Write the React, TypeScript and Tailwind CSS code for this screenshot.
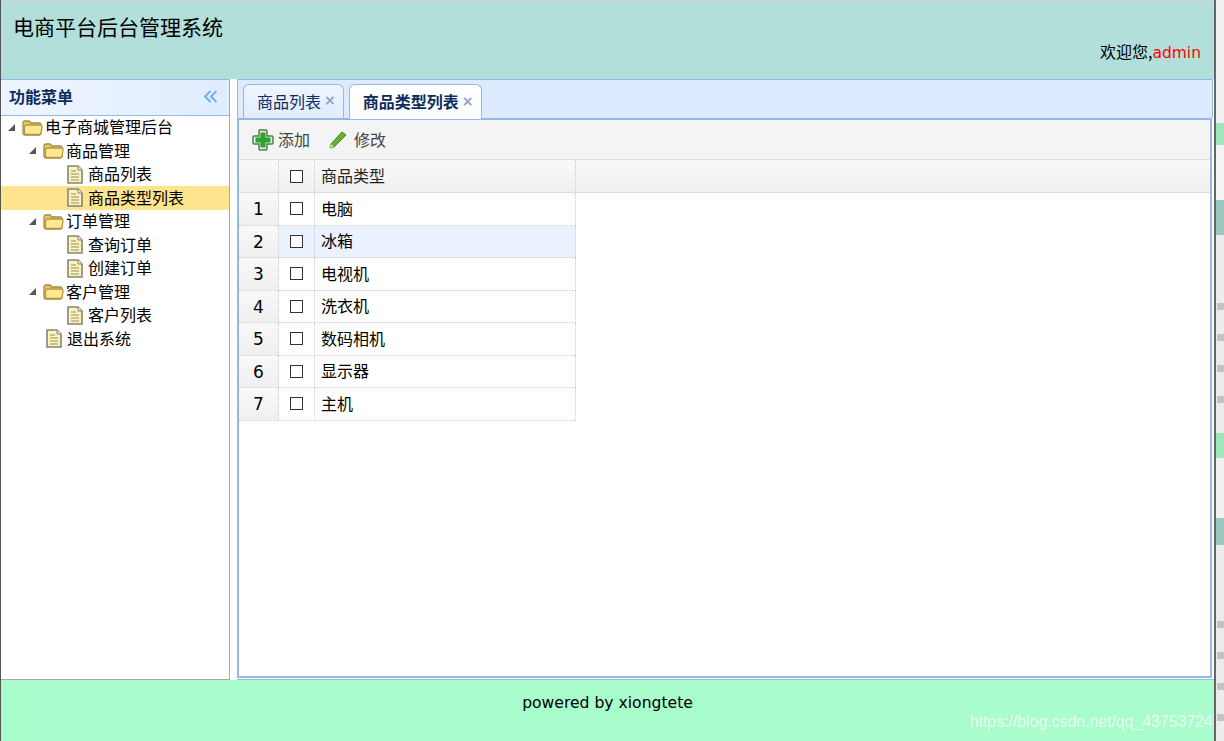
import { ReactNode } from "react"

const cjk = "font-['Noto_Sans_CJK_SC','DejaVu_Sans',sans-serif]"

function Arrow() {
  return (
    <svg width="9" height="9" viewBox="0 0 9 9" className="shrink-0">
      <path d="M8 1V8H1Z" fill="#555" />
    </svg>
  )
}

function Folder() {
  return (
    <svg width="21" height="17" viewBox="0 0 21 17" className="shrink-0">
      <path d="M1 4.500Q1 2 3 2H7L9 4H17Q19 4 19 6V14Q19 16 17 16H3Q1 16 1 14Z" fill="#e9c766" stroke="#a58a45" strokeWidth="1.300" />
      <path d="M2.500 7.500Q3 6 5 6H18Q20.500 6 20 8L19 14.500Q18.700 15.500 17 15.500H4Q2.500 15.500 2.500 14Z" fill="#fbe88f" stroke="#b4964a" strokeWidth="1.300" />
    </svg>
  )
}

function FileIcon() {
  return (
    <svg width="16" height="19" viewBox="0 0 16 19" className="shrink-0">
      <path d="M1 1H11L15 5V18H1Z" fill="#fdf3b4" stroke="#85857a" strokeWidth="1.600" />
      <path d="M11 1V5H15" fill="#eee" stroke="#85857a" />
      <path d="M4 6H9M4 9H12M4 12H12M4 15H12" stroke="#8f8f7e" strokeWidth="1.200" />
    </svg>
  )
}

function TreeRow({ depth, kind, label, active }: { depth: number; kind: "folder" | "file"; label: string; active?: boolean }) {
  const pad = depth === 0 ? "pl-[6px]" : depth === 1 ? "pl-[27px]" : "pl-[66px]"
  return (
    <div className={`flex h-[23.5px] items-center ${pad} ${active ? "bg-[#ffe48d]" : ""}`}>
      {kind === "folder" && <Arrow />}
      {kind === "folder" && <span className="ml-[6px]"><Folder /></span>}
      {kind === "file" && <FileIcon />}
      <span className={`${kind === "file" ? "ml-[5px]" : "ml-[2px]"} mb-[2px] text-[16px] leading-none text-black ${cjk}`}>{label}</span>
    </div>
  )
}

function Tab({ label, active }: { label: string; active?: boolean }) {
  return (
    <div
      className={`flex items-center rounded-t-[6px] border border-b-0 border-[#95b8e7] pb-[2px] pl-[13px] pr-[7px] text-[16px] text-[#0e2d5f] ${cjk} ${
        active ? "relative z-10 -mb-px h-[35px] bg-white font-bold" : "h-[34px] bg-gradient-to-b from-[#eff5ff] to-[#e0ecff]"
      }`}
    >
      {label}
      <span className="ml-[3px] font-['DejaVu_Sans',sans-serif] text-[14px] font-bold text-[#8aa4c8]">×</span>
    </div>
  )
}

function Cell({ className, children }: { className: string; children?: ReactNode }) {
  return <div className={`flex items-center border-r border-dotted border-[#ccc] ${className}`}>{children}</div>
}

function Check() {
  return <span className="mx-auto block h-[13px] w-[13px] border border-[#333] bg-white" />
}

function Smudges({ count }: { count: number }) {
  return (
    <div className="flex flex-col gap-[24px] pl-px">
      {Array.from({ length: count }, (_, i) => (
        <span key={i} className="block h-[7px] w-[8px] bg-[#c4c4c4]" />
      ))}
    </div>
  )
}

const rows = ["电脑", "冰箱", "电视机", "洗衣机", "数码相机", "显示器", "主机"]
const tree: { depth: number; kind: "folder" | "file"; label: string; active?: boolean }[] = [
  { depth: 0, kind: "folder", label: "电子商城管理后台" },
  { depth: 1, kind: "folder", label: "商品管理" },
  { depth: 2, kind: "file", label: "商品列表" },
  { depth: 2, kind: "file", label: "商品类型列表", active: true },
  { depth: 1, kind: "folder", label: "订单管理" },
  { depth: 2, kind: "file", label: "查询订单" },
  { depth: 2, kind: "file", label: "创建订单" },
  { depth: 1, kind: "folder", label: "客户管理" },
  { depth: 2, kind: "file", label: "客户列表" },
]

export default function App() {
  return (
    <div className="relative flex h-[741px] w-[1224px] overflow-hidden bg-white">
      <div className="flex w-[1214px] flex-col border-l border-[#555]">
        {/* header */}
        <header className={`flex h-[79px] shrink-0 flex-col border-t border-[#d5d5d5] bg-[#b2dfda] text-black ${cjk}`}>
          <div className="pl-[12px] pt-[11px] text-[21px] leading-[28px]">电商平台后台管理系统</div>
          <div className="mt-[-1px] pr-[13px] pt-0 text-right text-[16px] leading-[24px]">
            欢迎您,<span className="font-['DejaVu_Sans',sans-serif] text-[15.5px] text-[#ff0000]">admin</span>
          </div>
        </header>

        <div className="flex min-h-0 flex-1">
          {/* west */}
          <aside className="flex w-[229px] shrink-0 flex-col border-r border-b border-t border-r-[#555]/50 border-b-[#555]/50 border-t-[#95b8e7]">
            <div className={`flex h-[35.5px] shrink-0 items-center justify-between border-b border-[#95b8e7] bg-gradient-to-r from-[#eff5ff] to-[#e0ecff] pb-[2px] pl-[8px] pr-[12px] text-[16px] font-bold text-[#0e2d5f] ${cjk}`}>
              功能菜单
              <svg width="13" height="13" viewBox="0 0 13 13" fill="none" stroke="#62aef0" strokeWidth="1.800">
                <path d="M6.500 1L1 6.500L6.500 12M12.500 1L7 6.500L12.500 12" />
              </svg>
            </div>
            <div className="flex-1 bg-white">
              {tree.map((r) => (
                <TreeRow key={r.label} {...r} />
              ))}
              <div className="flex h-[23.5px] items-center pl-[45px]">
                <FileIcon />
                <span className={`mb-[2px] ml-[5px] text-[16px] leading-none text-black ${cjk}`}>退出系统</span>
              </div>
            </div>
          </aside>

          {/* center */}
          <main className="ml-[7px] flex min-w-0 flex-1 flex-col border-b border-[#95b8e7] pb-px pr-[1px]">
            <div className="flex h-[39px] shrink-0 items-end gap-[5px] border border-b-0 border-[#95b8e7] bg-[#deeaff] pl-[5px] pr-0">
              <Tab label="商品列表" />
              <Tab label="商品类型列表" active />
            </div>
            <div className="mr-[1px] flex min-h-0 flex-1 flex-col border-[2px] border-[#95b8e7] bg-white">
              <div className={`flex h-[40px] shrink-0 items-center border-b border-[#ddd] bg-[#f4f4f4] pl-[13px] text-[16px] text-[#444] ${cjk}`}>
                <svg width="22" height="22" viewBox="0 0 22 22">
                  <path d="M7 1.500Q7 1 8 1H14Q15 1 15 2V7H20Q21 7 21 8V14Q21 15 20 15H15V20Q15 21 14 21H8Q7 21 7 20V15H2Q1 15 1 14V8Q1 7 2 7H7Z" fill="#dff3d8" stroke="#4c7f55" strokeWidth="1.500" />
                  <path d="M8.500 3.500H13.500V8.500H18.500V13.500H13.500V18.500H8.500V13.500H3.500V8.500H8.500Z" fill="#2fa32f" />
                </svg>
                <span className="mb-[2px] ml-[4px]">添加</span>
                <svg width="20" height="20" viewBox="0 0 20 20" className="ml-[18px]">
                  <path d="M3 14L14 2L18 5L6 17L2 18Z" fill="#63b32e" stroke="#3f8a1f" />
                  <path d="M2 18L3 14L6 17Z" fill="#e8d8a8" />
                </svg>
                <span className="mb-[2px] ml-[6px]">修改</span>
              </div>

              <div className={`flex h-[33px] shrink-0 border-b border-[#ddd] bg-gradient-to-b from-[#f9f9f9] to-[#efefef] text-[16px] text-[#222] ${cjk}`}>
                <Cell className="w-[40px]" />
                <Cell className="w-[36px]"><Check /></Cell>
                <Cell className="w-[261px] pb-[2px] pl-[6px]">商品类型</Cell>
              </div>

              {rows.map((name, i) => (
                <div key={name} className={`flex h-[32.500px] w-[337px] shrink-0 border-b border-dotted border-[#ccc] text-[16px] text-black ${cjk} ${i === 1 ? "bg-[#eaf2ff]" : ""}`}>
                  <Cell className="w-[40px] justify-center bg-gradient-to-b from-[#f9f9f9] to-[#efefef] pt-[2px] font-['DejaVu_Sans',sans-serif] text-[17px]">{i + 1}</Cell>
                  <Cell className="w-[36px]"><Check /></Cell>
                  <Cell className="flex-1 pb-[2px] pl-[6px]">{name}</Cell>
                </div>
              ))}
            </div>
          </main>
        </div>

        <footer className="flex h-[61px] shrink-0 justify-center bg-[#a9fccb] pt-[11px] font-['DejaVu_Sans',sans-serif] text-[15.6px] leading-[24px] text-black">
          powered by xiongtete
        </footer>
      </div>

      {/* the window behind */}
      <div className="flex w-[10px] shrink-0 flex-col border-l-2 border-[#666] bg-[#f0f0f0]">
        <div className="h-[123px] shrink-0 bg-[#f1f1f1]" />
        <div className="h-[22px] shrink-0 bg-[#9fe6bd]" />
        <div className="h-[55px] shrink-0 bg-[#f4f4f4]" />
        <div className="h-[35px] shrink-0 bg-[#9cc7bf]" />
        <div className="flex h-[198px] shrink-0 items-end bg-[#ececec] pb-[30px]">
          <Smudges count={4} />
        </div>
        <div className="h-[25px] shrink-0 bg-[#9fe6bd]" />
        <div className="h-[60px] shrink-0 bg-[#f1f1f1]" />
        <div className="h-[27px] shrink-0 bg-[#9cc7bf]" />
        <div className="flex flex-1 items-end bg-[#ececec] pb-[20px]">
          <Smudges count={4} />
        </div>
      </div>

      <div className="pointer-events-none absolute left-[970px] top-[711px] whitespace-nowrap font-['Liberation_Sans',sans-serif] text-[15.84px] leading-[22px] text-white/75 blur-[0.4px]">
        https://blog.csdn.net/qq_43753724
      </div>
    </div>
  )
}
